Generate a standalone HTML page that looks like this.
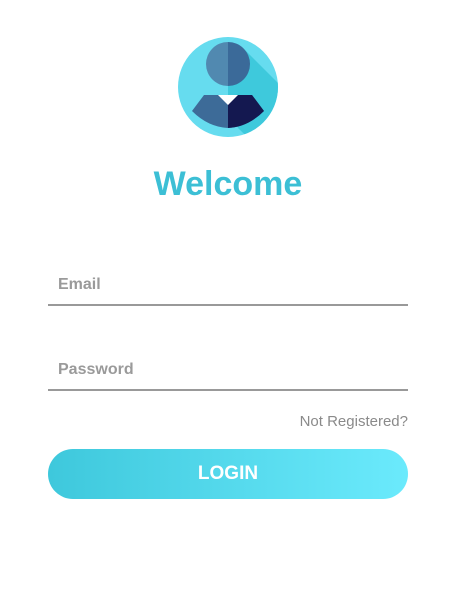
<!DOCTYPE html>
<html><head><style>
body{margin:0;width:472px;height:595px;background:#fff;font-family:"Liberation Sans",sans-serif;position:relative;overflow:hidden}
.a{position:absolute}
</style></head><body>
<svg class="a" style="left:178px;top:37px" width="100" height="100" viewBox="0 0 100 100">
<defs><clipPath id="c"><circle cx="50" cy="50" r="50"/></clipPath></defs>
<circle cx="50" cy="50" r="50" fill="#66dcef"/>
<g clip-path="url(#c)">
<polygon points="50,5 65.5,11.5 140,86 100,130 60,91 50,58" fill="#3ec9dc"/>
</g>
<path d="M50,5 A22,22 0 0 0 50,49 Z" fill="#5189b0"/>
<path d="M50,5 A22,22 0 0 1 50,49 Z" fill="#3b6a99"/>
<path d="M26,58 L74,58 L86,74 Q70,90 50,91 Q30,90 14,74 Z" fill="#3d6b98"/>
<path d="M50,58 L74,58 L86,74 Q70,90 50,91 Z" fill="#141850"/>
<polygon points="40,58 60,58 50,68" fill="#fff"/>
</svg>
<div class="a" style="left:0;width:456px;top:165px;text-align:center;font-size:34px;font-weight:bold;color:#3cbfd5">Welcome</div>
<div class="a" style="left:58px;top:276px;font-size:16px;font-weight:bold;color:#9a9a9a">Email</div>
<div class="a" style="left:48px;top:304px;width:360px;height:2px;background:#999"></div>
<div class="a" style="left:58px;top:361px;font-size:16px;font-weight:bold;color:#9a9a9a">Password</div>
<div class="a" style="left:48px;top:389px;width:360px;height:2px;background:#999"></div>
<div class="a" style="right:64px;top:413px;font-size:15px;color:#8a8a8a">Not Registered?</div>
<div class="a" style="left:48px;top:449px;width:360px;height:50px;border-radius:25px;background:linear-gradient(90deg,#3ec8dc,#6beafc);color:#fff;font-size:19px;font-weight:bold;line-height:50px;text-align:center">LOGIN</div>
</body></html>
